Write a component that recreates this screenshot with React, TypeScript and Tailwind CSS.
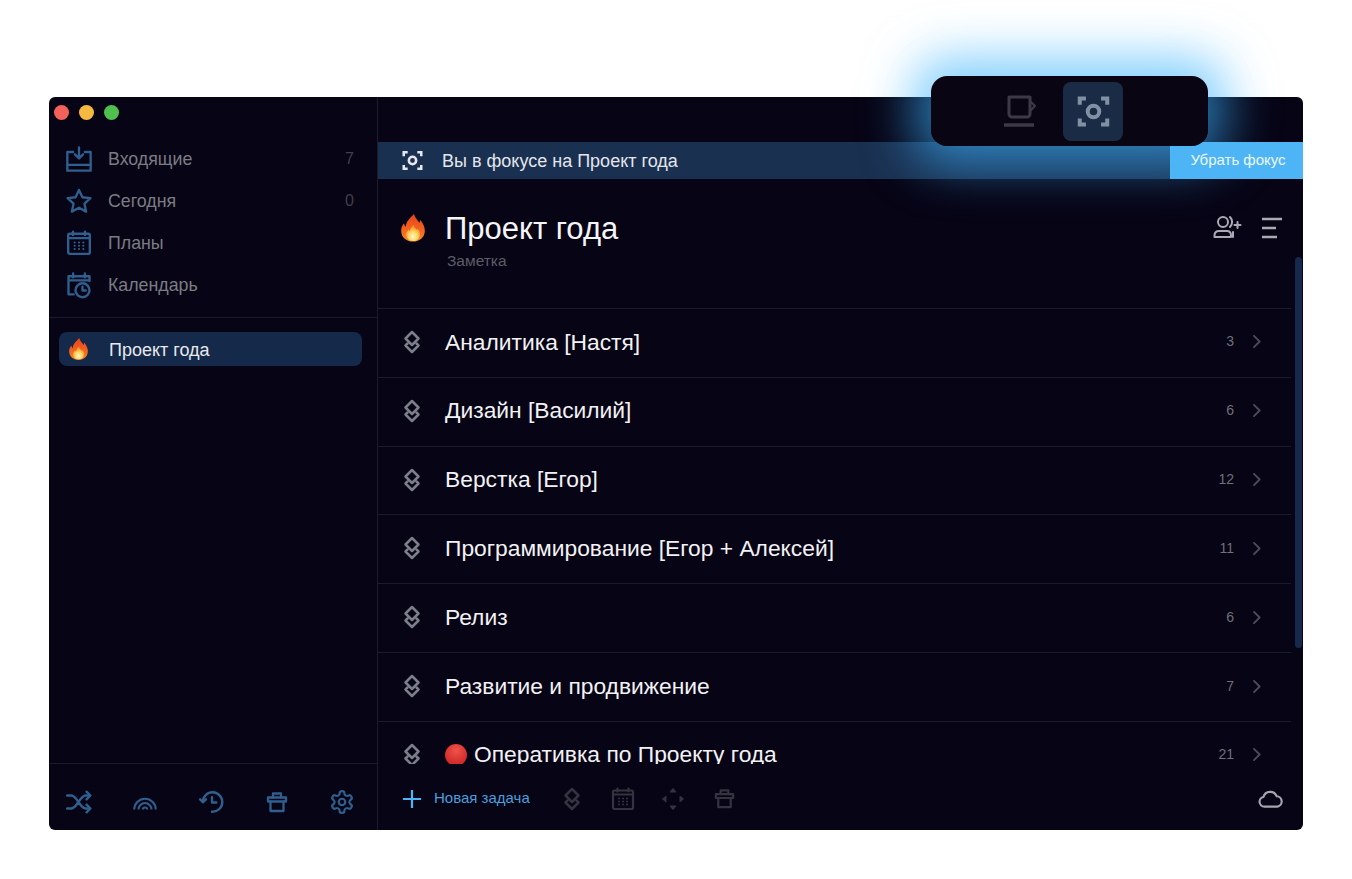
import { ReactElement, ReactNode } from "react";

const FONT = "[font-family:'Liberation_Sans',Arial,sans-serif]";

function Icon({ size, h, className, children, box }: { size: number; h?: number; className: string; children: ReactNode; box?: string }): ReactElement {
  return (
    <svg
      width={size}
      height={h ?? size}
      viewBox={box ?? "0 0 24 24"}
      fill="none"
      stroke="currentColor"
      strokeWidth={2}
      strokeLinecap="round"
      strokeLinejoin="round"
      className={className}
    >
      {children}
    </svg>
  );
}

function Flame({ size }: { size: number }): ReactElement {
  return (
    <svg width={size} height={size * 1.15} viewBox="0 0 24 28">
      <defs>
        <linearGradient id="flame-outer" x1="0" y1="0" x2="0" y2="1">
          <stop offset="0" stopColor="#e8421c" />
          <stop offset="0.6" stopColor="#f4651e" />
          <stop offset="1" stopColor="#f98a2a" />
        </linearGradient>
        <radialGradient id="flame-inner" cx="0.5" cy="0.72" r="0.6">
          <stop offset="0" stopColor="#fff6c8" />
          <stop offset="0.55" stopColor="#fdd35c" />
          <stop offset="1" stopColor="#f98f2a" />
        </radialGradient>
      </defs>
      <path
        d="M13 0c1 4 3.500 6 5.500 9 .6-1 .9-2 .8-3.200C22 9 24 13 24 17c0 6.500-5 11-12 11S0 23.500 0 17c0-3 1.200-5.500 3-7.500.1 1.500.6 2.600 1.700 3.500C4.800 7.500 9 4.500 13 0z"
        fill="url(#flame-outer)"
      />
      <path
        d="M12.500 11c.6 2.500 2.200 3.600 3.600 5.400.3-.5.500-1 .5-1.600 1.700 2 2.600 3.800 2.600 5.700 0 4-3.200 7-7.200 7s-7-3-7-6.600c0-2.400 1.300-4 2.800-5.500.1 1 .4 1.700 1 2.200.2-2.600 1.600-4.500 3.700-6.600z"
        fill="url(#flame-inner)"
      />
    </svg>
  );
}

function StackIcon({ className, size = 20 }: { className: string; size?: number }): ReactElement {
  return (
    <Icon size={size} h={size * 1.2} box="0 0 20 24" className={className}>
      <path d="M10 2 L16.500 8.500 L10 15 L3.500 8.500 Z" strokeWidth={2.500} />
      <path d="M5.500 13.500 L3.500 15.500 L10 22 L16.500 15.500 L14.500 13.500" strokeWidth={2.500} />
    </Icon>
  );
}

function FocusIcon({ size, className }: { size: number; className: string }): ReactElement {
  return (
    <Icon size={size} className={className} box="0 0 24 24">
      <path d="M2 7V2.500h4.500M22 7V2.500h-4.500M2 17v4.500h4.500M22 17v4.500h-4.500" strokeWidth={2.900} strokeLinecap="butt" strokeLinejoin="miter" />
      <circle cx="12" cy="12" r="4.200" strokeWidth={2.900} />
    </Icon>
  );
}

function PlansIcon({ size, className }: { size: number; className: string }): ReactElement {
  return (
    <Icon size={size} className={className}>
      <rect x="2" y="3.500" width="20" height="18.500" rx="1.500" strokeWidth={2.200} />
      <path d="M2 7.500h20M6.500 1.500v3M17.500 1.500v3" strokeWidth={2.200} />
      <path d="M8 11.500h.01M12 11.500h.01M16 11.500h.01M8 14.500h.01M12 14.500h.01M16 14.500h.01M8 17.500h.01M12 17.500h.01M16 17.500h.01" strokeWidth={2} />
    </Icon>
  );
}

function TrashIcon({ size, className }: { size: number; className: string }): ReactElement {
  return (
    <Icon size={size} className={className}>
      <path d="M3 7.500h18v4H3z" strokeWidth={2.300} />
      <path d="M5.500 11.500V21h13v-9.500" strokeWidth={2.300} />
      <path d="M8 7.500V3.500h8v4" strokeWidth={2.300} />
    </Icon>
  );
}

const navItems: { label: string; count?: string; icon: ReactElement }[] = [
  {
    label: "Входящие",
    count: "7",
    icon: (
      <Icon size={28} className="text-[#2f5f8e]">
        <path d="M7 6H2v16h20V6h-5" />
        <path d="M2 17h20" />
        <path d="M12 2v9M8.500 8 12 11.500 15.500 8" />
      </Icon>
    ),
  },
  {
    label: "Сегодня",
    count: "0",
    icon: (
      <Icon size={28} className="text-[#2f5f8e]">
        <path d="M12 2.500l2.900 6.300 6.900.8-5.100 4.700 1.400 6.800L12 17.700l-6.100 3.400 1.400-6.800-5.100-4.700 6.900-.8z" />
      </Icon>
    ),
  },
  { label: "Планы", icon: <PlansIcon size={26} className="text-[#2f5f8e]" /> },
  {
    label: "Календарь",
    icon: (
      <Icon size={28} className="text-[#2f5f8e]">
        <path d="M7.500 20H3V4.500h18v4M3 8h18M7 2v3.500M17 2v3.500" />
        <circle cx="15" cy="16.500" r="6" />
        <path d="M15 13.500v3.200h2.800" />
      </Icon>
    ),
  },
];

const rows: { title: string; count: string; dot?: boolean }[] = [
  { title: "Аналитика [Настя]", count: "3" },
  { title: "Дизайн [Василий]", count: "6" },
  { title: "Верстка [Егор]", count: "12" },
  { title: "Программирование [Егор + Алексей]", count: "11" },
  { title: "Релиз", count: "6" },
  { title: "Развитие и продвижение", count: "7" },
  { title: "Оперативка по Проекту года", count: "21", dot: true },
];

function Sidebar(): ReactElement {
  return (
    <aside className="flex w-[329px] shrink-0 flex-col border-r border-[#1c1b2e]">
      <div className="flex h-[41px] shrink-0 gap-[10px] pl-[5px] pt-[8px]">
        <span className="h-[15px] w-[15px] rounded-full bg-[#f4605a]" />
        <span className="h-[15px] w-[15px] rounded-full bg-[#f6b93f]" />
        <span className="h-[15px] w-[15px] rounded-full bg-[#4fc04d]" />
      </div>
      <nav className="flex flex-col border-b border-[#1c1b2e] pb-[11px]">
        {navItems.map((item) => (
          <div key={item.label} className="flex h-[42px] items-center pl-[16px] pr-[23px]">
            <span className="flex w-[28px] justify-center">{item.icon}</span>
            <span className="ml-[15px] flex-1 pt-[2px] text-[17.800px] leading-none text-[#7b7c83]">{item.label}</span>
            <span className="text-[16px] text-[#3f4047]">{item.count}</span>
          </div>
        ))}
      </nav>
      <div className="flex-1 px-[10px] pt-[14px]">
        <div className="flex h-[34px] w-[303px] items-center rounded-lg bg-[#15294a] pl-[10px]">
          <Flame size={19} />
          <span className="ml-[21px] pt-[1px] text-[18px] leading-none text-[#e8e9ee]">Проект года</span>
        </div>
      </div>
      <div className="flex h-[67px] shrink-0 items-center justify-between border-t border-[#1c1b2e] pl-[17px] pr-[22px] pt-[10px]">
        <Icon size={26} className="text-[#2f5f8e]">
          <path d="M1 6h4c5 0 8 12 13 12h4M1 18h4c5 0 8-12 13-12h4" strokeWidth={2.200} />
          <path d="M19 2.500 22.500 6 19 9.500M19 14.500 22.500 18 19 21.500" strokeWidth={2.200} />
        </Icon>
        <Icon size={26} className="text-[#2f5f8e]">
          <path d="M2 19a10 10 0 0 1 20 0M6 19a6 6 0 0 1 12 0M10 19a2 2 0 0 1 4 0" strokeLinecap="butt" strokeWidth={1.900} />
        </Icon>
        <Icon size={26} className="text-[#2f5f8e]">
          <path d="M3.500 12A9 9 0 1 1 12 21" strokeWidth={2.200} />
          <path d="M1 9.500l2.700 2.700 2.700-2.700" strokeWidth={2.200} />
          <path d="M12 7.500V12.500h4" strokeWidth={2.200} />
        </Icon>
        <TrashIcon size={24} className="text-[#2f5f8e]" />
        <Icon size={26} className="text-[#2f5f8e]">
          <path d="M12.220 2h-.440a2 2 0 0 0-2 2v.180a2 2 0 0 1-1 1.730l-.430.250a2 2 0 0 1-2 0l-.150-.080a2 2 0 0 0-2.730.730l-.220.380a2 2 0 0 0 .730 2.730l.150.100a2 2 0 0 1 1 1.720v.510a2 2 0 0 1-1 1.740l-.150.090a2 2 0 0 0-.730 2.730l.220.380a2 2 0 0 0 2.730.730l.150-.080a2 2 0 0 1 2 0l.430.250a2 2 0 0 1 1 1.730V20a2 2 0 0 0 2 2h.440a2 2 0 0 0 2-2v-.180a2 2 0 0 1 1-1.730l.430-.250a2 2 0 0 1 2 0l.150.080a2 2 0 0 0 2.730-.730l.220-.390a2 2 0 0 0-.730-2.730l-.150-.080a2 2 0 0 1-1-1.740v-.500a2 2 0 0 1 1-1.740l.150-.090a2 2 0 0 0 .730-2.730l-.220-.380a2 2 0 0 0-2.730-.730l-.150.080a2 2 0 0 1-2 0l-.430-.250a2 2 0 0 1-1-1.730V4a2 2 0 0 0-2-2z" />
          <circle cx="12" cy="12" r="3" />
        </Icon>
      </div>
    </aside>
  );
}

function TaskRow({ title, count, dot }: { title: string; count: string; dot?: boolean }): ReactElement {
  return (
    <div className="flex h-[68.830px] shrink-0 items-center border-t border-[#1c1b2e] pb-[2px] pl-[24px] pr-[27px]">
      <StackIcon className="text-[#7b7f8a]" />
      {dot && (
        <span className="ml-[23px] h-[22px] w-[22px] shrink-0 rounded-full bg-[radial-gradient(circle_at_50%_30%,#f0534a,#c4181c)]" />
      )}
      <span className={`${dot ? "ml-[7px]" : "ml-[23px]"} flex-1 text-[22.800px] leading-none text-[#f2f2f5]`}>{title}</span>
      <span className="text-[14px] text-[#6f7078]">{count}</span>
      <Icon size={15} className="ml-[15px] text-[#4c4c58]">
        <path d="M8 3l9 9-9 9" strokeWidth={3} />
      </Icon>
    </div>
  );
}

function Main(): ReactElement {
  return (
    <main className="flex min-w-0 flex-1 flex-col">
      <div className="h-[45px] shrink-0" />
      <div className="flex h-[37px] shrink-0 items-center bg-[#1a3050] pl-[24px]">
        <FocusIcon size={21} className="text-[#e6e8ee]" />
        <span className="ml-[19px] flex-1 text-[18px] leading-none text-[#e3e6ec]">Вы в фокусе на Проект года</span>
        <button type="button" className="relative z-20 h-full w-[133px] bg-[#4db5f5] pl-[3px] text-[15px] text-[#eef7ff]">
          Убрать фокус
        </button>
      </div>

      <div className="relative flex min-h-0 flex-1 flex-col">
        <div className="flex h-[129px] shrink-0 pl-[23px] pr-[19px] pt-[33px]">
          <div className="pt-[2px]">
            <Flame size={24} />
          </div>
          <div className="ml-[20px] flex-1">
            <h1 className="text-[31px] leading-[34px] text-[#f5f5f7]">Проект года</h1>
            <p className="ml-[2px] mt-[3px] text-[15.500px] text-[#5c5d66]">Заметка</p>
          </div>
          <Icon size={30} box="0 0 30 30" className="mt-[1px] text-[#a9abb3]">
            <circle cx="10" cy="9" r="5" strokeWidth={2} />
            <path d="M1.500 24v-1.500c0-3 2-4.500 4.500-4.500h8c2.500 0 4 2 4 4.500V24z" strokeWidth={2} />
            <path d="M17 4a7 7 0 0 1 0 10M24.500 9v6M21.500 12h6M20 19v5" strokeWidth={2} />
          </Icon>
          <Icon size={24} className="ml-[17px] mt-[4px] text-[#a9abb3]">
            <path d="M2 3h20M2 12h14M2 21h15" strokeWidth={2.700} strokeLinecap="butt" />
          </Icon>
        </div>

        <div className="flex h-[456px] min-h-0 flex-col overflow-hidden pr-[12px]">
          {rows.map((r) => (
            <TaskRow key={r.title} title={r.title} count={r.count} dot={r.dot} />
          ))}
        </div>

        <div className="flex flex-1 items-center pl-[25px] pr-[19px] pt-[3px]">
          <svg width="18" height="18" viewBox="0 0 18 18" stroke="#4db5f5" strokeWidth="2.200">
            <path d="M9 0v18M0 9h18" />
          </svg>
          <span className="ml-[13px] text-[15px] text-[#4a9fdc]">Новая задача</span>
          <StackIcon className="ml-[32px] text-[#33343f]" />
          <PlansIcon size={24} className="ml-[29px] text-[#33343f]" />
          <Icon size={26} className="ml-[25px] text-[#33343f]">
            <path d="M12 2.500l2.500 3h-5zM12 21.500l2.500-3h-5zM2.500 12l3-2.500v5zM21.500 12l-3-2.500v5z" fill="currentColor" strokeWidth={1} />
          </Icon>
          <TrashIcon size={23} className="ml-[27px] text-[#33343f]" />
          <span className="flex-1" />
          <Icon size={26} className="text-[#a4a6ae]">
            <path d="M18 19H6a4.500 4.500 0 0 1-1-8.900A6.500 6.500 0 0 1 17.300 9.500 4.800 4.800 0 0 1 18 19z" strokeWidth={2} />
          </Icon>
        </div>

        <div className="absolute right-[1px] top-[78px] h-[391px] w-[7px] rounded-full bg-[#16294a]" />
      </div>
    </main>
  );
}

export default function App(): ReactElement {
  return (
    <div className={`relative min-h-screen overflow-hidden bg-white pl-[49px] pt-[97px] ${FONT}`}>
      <div className="flex h-[733px] w-[1254px] overflow-hidden rounded-[6px] bg-[#070415]">
        <Sidebar />
        <Main />
      </div>
      {/* glow + floating focus switcher overlap the window's top edge */}
      <div className="absolute left-[931px] top-[76px] z-10 h-[70px] w-[277px] rounded-2xl shadow-[0_0_50px_18px_rgba(60,180,255,0.65)]" />
      <div className="absolute left-[931px] top-[76px] z-30 flex h-[70px] w-[277px] items-center rounded-2xl bg-[#0a0512] pl-[132px]">
        <div className="absolute left-[70px] top-[18px]">
          <Icon size={36} box="0 0 36 36" className="text-[#3d3a45]">
            <path d="M8 3h21v17a3 3 0 0 1-3 3H11a3 3 0 0 1-3-3z" strokeWidth={3} />
            <path d="M29 7l5 5-5 5" strokeWidth={2.200} />
            <path d="M3 31h30" strokeWidth={3.500} strokeLinecap="butt" />
          </Icon>
        </div>
        <div className="flex h-[59px] w-[60px] items-center justify-center rounded-lg bg-[#1a2c45]">
          <FocusIcon size={33} className="text-[#8290a5]" />
        </div>
      </div>
    </div>
  );
}
